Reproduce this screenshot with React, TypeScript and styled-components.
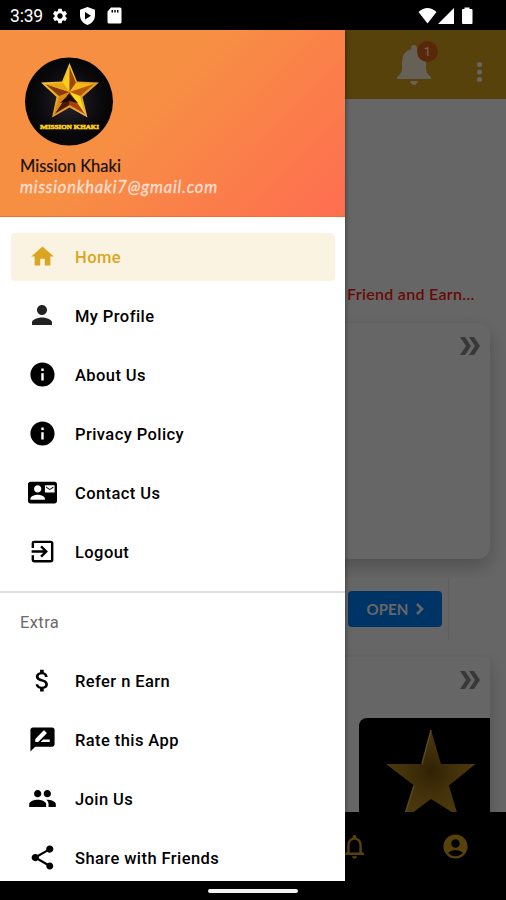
import React from 'react';
import styled, { createGlobalStyle } from 'styled-components';
import {
  MdSettings, MdHome, MdPerson, MdInfo, MdContactMail, MdExitToApp, MdAttachMoney,
  MdRateReview, MdPeople, MdShare, MdNotificationsNone, MdAccountCircle,
} from 'react-icons/md';
import type { IconType } from 'react-icons';

const GlobalStyle = createGlobalStyle`
  * { box-sizing: border-box; }
  body { margin: 0; background: #000; font-family: Roboto, "Liberation Sans", sans-serif; }
`;

const Phone = styled.div`
  display: flex;
  flex-direction: column;
  width: 506px;
  height: 900px;
  overflow: hidden;
  background: #000;
`;

const StatusBar = styled.header`
  display: flex;
  align-items: center;
  justify-content: space-between;
  height: 30px;
  padding: 1px 32px 0 10px;
  color: #fff;
`;

const StatusGroup = styled.div<{ $gap: number }>`
  display: flex;
  align-items: center;
  gap: ${(p) => p.$gap}px;
  svg { display: block; }
`;

const Clock = styled.span`
  width: 33px;
  font-size: 17.5px;
  line-height: 20px;
  letter-spacing: -0.2px;
  white-space: nowrap;
`;

const Screen = styled.div`
  position: relative;
  flex: none;
  height: 851px;
  overflow: hidden;
`;

const Page = styled.main`
  display: flex;
  flex-direction: column;
  height: 100%;
  background: #fff;
`;

const AppBar = styled.div`
  display: flex;
  flex: none;
  justify-content: flex-end;
  align-items: flex-start;
  height: 69px;
  padding: 14px 24px 0 0;
  background: #daa520;
`;

const BellButton = styled.div`
  position: relative;
  width: 34px;
  height: 42px;
  margin-right: 46px;
`;

const CountBadge = styled.span`
  position: absolute;
  left: 20px;
  top: -3px;
  width: 21px;
  height: 21px;
  border-radius: 50%;
  background: #dc6414;
  color: #fff;
  font-size: 13px;
  line-height: 21px;
  text-align: center;
`;

const MoreButton = styled.div`
  padding-top: 17px;
  svg { display: block; }
`;

const Feed = styled.div`
  display: flex;
  flex-direction: column;
  flex: none;
  height: 713px;
  overflow: hidden;
`;

const Marquee = styled.div`
  flex: none;
  height: 221px;
  padding: 183px 0 0 347px;
  color: #ff2010;
  font: 600 16px/24px Lato, sans-serif;
  letter-spacing: 0.3px;
  white-space: nowrap;
`;

const CardArea = styled.section<{ $height: number }>`
  flex: none;
  height: ${(p) => p.$height}px;
  padding: 3px 16px 0;
`;

const Card = styled.div<{ $height: number; $radius: number }>`
  display: flex;
  flex-direction: column;
  align-items: flex-end;
  height: ${(p) => p.$height}px;
  padding-top: 14px;
  border-radius: ${(p) => p.$radius}px;
  background: #fff;
  box-shadow: 0 8px 18px rgba(0, 0, 0, 0.22);
  svg { flex: none; }
`;

const ChevronWrap = styled.div`
  flex: none;
  height: 47px;
  padding-right: 10px;
`;

const AdStrip = styled.div`
  display: flex;
  flex: none;
  align-items: center;
  justify-content: flex-end;
  position: relative;
  height: 76px;
  padding: 0 57px 15px 0;
  background: #fff;
`;

const AdFrame = styled.div`
  display: flex;
  align-items: center;
  justify-content: flex-end;
  width: 420px;
  height: 61px;
  padding-right: 6px;
  border-right: 1px solid #ececec;
`;

const OpenButton = styled.div`
  display: flex;
  align-items: center;
  justify-content: center;
  gap: 7px;
  width: 94px;
  height: 36px;
  border-radius: 4px;
  background: #0082ff;
  color: #fff;
  font: 700 15px/20px Lato, sans-serif;
  letter-spacing: 0.1px;
`;

const Poster = styled.div`
  width: 131px;
  height: 160px;
  border-radius: 8px 0 0 0;
  background: #000;
`;

const BottomTabs = styled.nav`
  display: flex;
  align-items: flex-start;
  justify-content: flex-end;
  gap: 72px;
  height: 69px;
  padding: 20px 36px 0 0;
  background: #000;
  color: #daa520;
`;

const Scrim = styled.div`
  position: absolute;
  inset: 0;
  background: rgba(0, 0, 0, 0.6);
`;

const Drawer = styled.aside`
  position: absolute;
  inset: 0 auto 0 0;
  width: 345px;
  overflow: hidden;
  background: #fff;
  box-shadow: 0 0 5px rgba(0, 0, 0, 0.5);
`;

const Profile = styled.div`
  display: flex;
  flex-direction: column;
  height: 187px;
  padding: 26px 20px 0;
  background: linear-gradient(135deg, #f78f43 0%, #f78f43 42%, #fe6f50 97%);
  border-bottom: 1px solid #f5702e;
`;

const Avatar = styled.div`
  flex: none;
  width: 90px;
  height: 90px;
  margin: 0 0 9px 4px;
  svg { display: block; }
`;

const Name = styled.div`
  font: 400 16.5px/23px Lato, sans-serif;
  letter-spacing: 0;
  color: #14100c;
  -webkit-text-stroke: 0.2px #14100c;
`;

const Email = styled.div`
  font: italic 400 16.5px/18px Lato, sans-serif;
  letter-spacing: 0.8px;
  color: #ffdccb;
  -webkit-text-stroke: 0.4px #ffdccb;
`;

const Menu = styled.nav<{ $top: number }>`
  display: flex;
  flex-direction: column;
  gap: 11px;
  padding: ${(p) => p.$top}px 10px 0 11px;
`;

const MenuItem = styled.a<{ $active?: boolean }>`
  display: flex;
  align-items: center;
  flex: none;
  height: 48px;
  border-radius: 4px;
  background: ${(p) => (p.$active ? '#fbf3e2' : 'transparent')};
  color: ${(p) => (p.$active ? '#daa520' : '#000')};
`;

const MenuIcon = styled.span`
  display: flex;
  justify-content: center;
  width: 62px;
  margin-right: 2px;
  padding-bottom: 2px;
`;

const MenuLabel = styled.span`
  padding-top: 2px;
  font-size: 16.5px;
  font-weight: 500;
  letter-spacing: 0.42px;
  line-height: 24px;
`;

const Divider = styled.hr`
  height: 2px;
  margin: 15px 0 0;
  border: 0;
  background: #dedede;
`;

const GroupTitle = styled.h2`
  margin: 0;
  padding: 18px 20px 0;
  font-size: 16.5px;
  font-weight: 400;
  line-height: 24px;
  letter-spacing: 0.4px;
  color: #6a6a6a;
`;

const HomeBar = styled.footer`
  display: flex;
  justify-content: center;
  height: 19px;
  padding-top: 8px;
`;

const HomePill = styled.div`
  width: 90px;
  height: 4px;
  border-radius: 2px;
  background: #f4f4f4;
`;

interface Entry { label: string; icon: IconType; size: number; active?: boolean; color?: string }

const mainEntries: Entry[] = [
  { label: 'Home', icon: MdHome, size: 27, active: true },
  { label: 'My Profile', icon: MdPerson, size: 30, color: '#222' },
  { label: 'About Us', icon: MdInfo, size: 29 },
  { label: 'Privacy Policy', icon: MdInfo, size: 29 },
  { label: 'Contact Us', icon: MdContactMail, size: 29 },
  { label: 'Logout', icon: MdExitToApp, size: 29 },
];

const extraEntries: Entry[] = [
  { label: 'Refer n Earn', icon: MdAttachMoney, size: 29 },
  { label: 'Rate this App', icon: MdRateReview, size: 29 },
  { label: 'Join Us', icon: MdPeople, size: 29 },
  { label: 'Share with Friends', icon: MdShare, size: 29 },
];

const renderEntry = ({ label, icon: Icon, size, active, color }: Entry) => (
  <MenuItem key={label} $active={active}>
    <MenuIcon><Icon size={size} color={color} /></MenuIcon>
    <MenuLabel>{label}</MenuLabel>
  </MenuItem>
);

const DoubleChevron = () => (
  <ChevronWrap>
    <svg width="20" height="18" viewBox="0 0 20 18" fill="#8c8c8c">
      <path d="M0 0 H5 L11 9 L5 18 H0 L6 9Z M9 0 H14 L20 9 L14 18 H9 L15 9Z" />
    </svg>
  </ChevronWrap>
);

const Logo = () => (
  <svg width="90" height="90" viewBox="0 0 90 90">
    <defs>
      <radialGradient id="disc"><stop offset="0" stopColor="#26222a" /><stop offset="0.75" stopColor="#09080b" /><stop offset="1" stopColor="#050405" /></radialGradient>
      <linearGradient id="rim" x1="0" y1="0" x2="1" y2="1"><stop offset="0" stopColor="#ffe23a" /><stop offset="0.6" stopColor="#e39a1e" /><stop offset="1" stopColor="#f0b070" /></linearGradient>
    </defs>
    <circle cx="45" cy="45.500" r="44" fill="url(#disc)" />
    <path d="M45.5 7 L53 25.500 L75 26.500 L58.500 41 L63.500 61.500 L45.500 51.500 L28 61.500 L32.500 41 L17 26.500 L38 25.500Z" fill="url(#rim)" />
    <path d="M45.5 11 V36 L39 27Z" fill="#f8cf1c" />
    <path d="M45.5 11 V36 L52 27Z" fill="#9c4708" />
    <path d="M70 28 L45.500 36 L52 27Z" fill="#f3b91a" />
    <path d="M70 28 L45.500 36 L56 40Z" fill="#b95a0a" />
    <path d="M61 58 L45.500 36 L56 40Z" fill="#ffd91c" />
    <path d="M61 58 L45.500 36 V49Z" fill="#a3400c" />
    <path d="M30.500 58 L45.500 36 V49Z" fill="#4a1a08" />
    <path d="M30.500 58 L45.500 36 L35 40Z" fill="#d98a16" />
    <path d="M21 28 L45.500 36 L35 40Z" fill="#8a3a08" />
    <path d="M21 28 L45.500 36 L39 27Z" fill="#e9a516" />
    <path d="M36 47 L45.500 38 L54 47 L45.500 45Z" fill="#1c0a04" />
    <text x="45.500" y="72.500" textAnchor="middle" textLength="59" lengthAdjust="spacingAndGlyphs" fill="#ffd21c" stroke="#ffd21c" strokeWidth="0.5" fontFamily="Liberation Serif, serif" fontWeight="700">
      <tspan fontSize="7">M</tspan><tspan fontSize="5.800">ISSION </tspan><tspan fontSize="7">K</tspan><tspan fontSize="5.800">HAKI</tspan>
    </text>
  </svg>
);

const PosterStar = () => (
  <svg width="131" height="95" viewBox="0 0 131 95">
    <defs>
      <radialGradient id="gold" cx="0.5" cy="0.45" r="0.6"><stop offset="0" stopColor="#7a560c" /><stop offset="0.5" stopColor="#ab7e1c" /><stop offset="1" stopColor="#c49224" /></radialGradient>
    </defs>
    <path d="M72 12 L82 46 L116.500 46 L90 67.500 L99 98 L72 81 L44 102 L55 67.500 L27 46 L63 46Z" fill="url(#gold)" />
    <path d="M72 12 L63 46 M55 67.500 L46 96" fill="none" stroke="#dcb450" strokeWidth="1.500" />
  </svg>
);

export default function App() {
  return (
    <>
      <GlobalStyle />
      <Phone>
        <StatusBar>
          <StatusGroup $gap={8}>
            <Clock>3:39</Clock>
            <MdSettings size={18} />
            <svg width="19" height="18" viewBox="0 0 19 18"><path fill="#fff" fillRule="evenodd" d="M10.500 0 L18 2.800 V8 C18 13 15 16.500 10.500 18 C6 16.500 3 13 3 8 V2.800Z M8 5 V12.500 L14 8.700Z" /></svg>
            <svg width="21" height="17" viewBox="0 0 21 17"><path fill="#fff" fillRule="evenodd" d="M7 0.500 H16 Q17.500 0.500 17.500 2 V15 Q17.500 16.500 16 16.500 H5 Q3.500 16.500 3.500 15 V4.500Z M7.500 3 V5.500 H9 V3Z M10.300 3 V5.500 H11.800 V3Z M13 3 V5.500 H14.500 V3Z" /></svg>
          </StatusGroup>
          <StatusGroup $gap={0}>
            <svg width="56" height="18" viewBox="0 0 56 18" fill="#fff">
              <path d="M0.500 5 Q9.500 -3 18.500 5 L9.500 16.500Z" />
              <path d="M20 17 L36 1 V17Z" />
              <path d="M46.500 0.500 H51.500 V2 H53.500 Q54.500 2 54.500 3 V16 Q54.500 17 53.500 17 H45 Q44 17 44 16 V3 Q44 2 45 2 H46.500Z" />
            </svg>
          </StatusGroup>
        </StatusBar>

        <Screen>
          <Page>
            <AppBar>
              <BellButton>
                <svg width="34" height="42" viewBox="0 0 34 42" fill="#fff3d8">
                  <path d="M17 1 Q20 1 20 5 Q29 8 29 18 V24 Q29 30 34 33 V35 H0 V33 Q5 30 5 24 V18 Q5 8 14 5 Q14 1 17 1Z M13 37 H21 Q20 41 17 41 Q14 41 13 37Z" />
                </svg>
                <CountBadge>1</CountBadge>
              </BellButton>
              <MoreButton>
                <svg width="5" height="22" viewBox="0 0 5 22" fill="#fff"><circle cx="2.500" cy="3.500" r="2.500" /><circle cx="2.500" cy="11" r="2.500" /><circle cx="2.500" cy="18.500" r="2.500" /></svg>
              </MoreButton>
            </AppBar>
            <Feed>
              <Marquee>Friend and Earn...</Marquee>
              <CardArea $height={258}>
                <Card $height={236} $radius={12}><DoubleChevron /></Card>
              </CardArea>
              <AdStrip>
                <AdFrame>
                  <OpenButton>
                    OPEN
                    <svg width="8" height="12" viewBox="0 0 8 12" fill="none" stroke="#fff" strokeWidth="2.500"><path d="M1 1 L6 6 L1 11" /></svg>
                  </OpenButton>
                </AdFrame>
              </AdStrip>
              <CardArea $height={180}>
                <Card $height={220} $radius={4}>
                  <DoubleChevron />
                  <Poster><PosterStar /></Poster>
                </Card>
              </CardArea>
            </Feed>
            <BottomTabs>
              <MdNotificationsNone size={29} />
              <MdAccountCircle size={29} />
            </BottomTabs>
          </Page>
          <Scrim />
          <Drawer>
            <Profile>
              <Avatar><Logo /></Avatar>
              <Name>Mission Khaki</Name>
              <Email>missionkhaki7@gmail.com</Email>
            </Profile>
            <Menu $top={16}>{mainEntries.map(renderEntry)}</Menu>
            <Divider />
            <GroupTitle>Extra</GroupTitle>
            <Menu $top={22}>{extraEntries.map(renderEntry)}</Menu>
          </Drawer>
        </Screen>
        <HomeBar><HomePill /></HomeBar>
      </Phone>
    </>
  );
}
